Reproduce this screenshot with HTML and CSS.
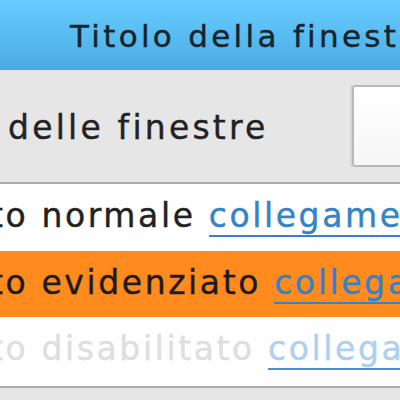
FILE: index.html
```html
<!DOCTYPE html>
<html lang="it">
<head>
  <meta charset="UTF-8">
  <title>Anteprima tema</title>
  <link rel="stylesheet" href="styles.css">
</head>
<body>

<div class="window">

  <!--barra del titolo-->
  <div class="titlebar">Titolo della finestra</div>

  <!--sfondo e campo di testo-->
  <div class="toolbar">
    <span class="label">delle finestre</span>
    <input class="entry" type="text" value="">
  </div>

  <!--righe della lista-->
  <ul class="list">
    <li class="row">to normale <a href="#">collegamento</a></li>
    <li class="row selected">to evidenziato <a href="#">collegamento</a></li>
    <li class="row disabled">to disabilitato <a href="#">collegamento</a></li>
  </ul>

  <div class="footer"></div>
</div>

</body>
</html>
```

FILE: styles.css
```css
* {
  margin: 0;
  padding: 0;
  list-style: none;
  box-sizing: border-box;
}

body {
  background-color: #e6e6e6;
  font-family: "DejaVu Sans", Lato, sans-serif;
  overflow: hidden;
}

.window {
  width: 400px;
  height: 400px;
  display: flex;
  flex-direction: column;
  overflow: hidden;
}

/*标题栏*/
.titlebar {
  height: 70px;
  flex-shrink: 0;
  padding-left: 70px;
  padding-top: 16px;
  background: linear-gradient(#68cdff, #4aabe3);
  color: #17232d;
  font-size: 31px;
  line-height: 40px;
  letter-spacing: 3.3px;
  -webkit-text-stroke: 0.4px currentColor;
  white-space: nowrap;
  overflow: hidden;
}

.toolbar {
  height: 112px;
  flex-shrink: 0;
  display: flex;
  align-items: center;
  justify-content: space-between;
  padding-left: 8px;
  background-color: #e6e6e6;
  white-space: nowrap;
}

.label {
  font-size: 33px;
  letter-spacing: 3.2px;
  -webkit-text-stroke: 0.4px currentColor;
  color: #222;
  padding-top: 2px;
}

.entry {
  width: 52px;
  height: 82px;
  flex-shrink: 0;
  margin-right: -4px;
  border: 2px solid #b9b9b9;
  border-radius: 3px;
  background: linear-gradient(#ffffff, #f6f6f6);
  box-shadow: -2px 0 0 #d4d4d4;
  outline: none;
}

.list {
  border-top: 2px solid #ababab;
  border-bottom: 2px solid #ababab;
  background-color: #fefefe;
}

.row {
  height: 67px;
  padding-top: 12px;
  font-size: 33px;
  line-height: 40px;
  letter-spacing: 2.6px;
  -webkit-text-stroke: 0.4px currentColor;
  color: #222;
  white-space: nowrap;
  overflow: hidden;
  text-indent: -10px;
}

.row a {
  color: #3483c6;
  text-decoration: none;
  border-bottom: 2px solid #3483c6;
}

.row.selected {
  height: 66px;
  background-color: #ff8a1e;
  color: #1c1c1c;
}

.row.disabled {
  height: 69px;
  color: #dedede;
}

.row.disabled a {
  color: #aed0ef;
  border-bottom-color: #4a90cf;
}

.footer {
  flex: 1;
  background-color: #e6e6e6;
}
```
